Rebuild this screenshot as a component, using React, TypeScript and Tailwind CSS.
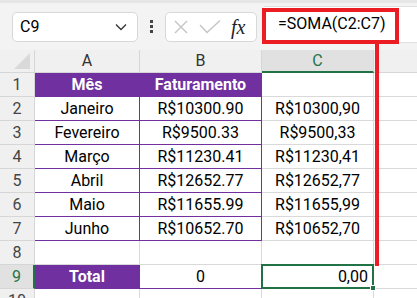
import React from "react";

const rows = [
  { a: "Janeiro", b: "R$10300.90", c: "R$10300,90" },
  { a: "Fevereiro", b: "R$9500.33", c: "R$9500,33" },
  { a: "Março", b: "R$11230.41", c: "R$11230,41" },
  { a: "Abril", b: "R$12652.77", c: "R$12652,77" },
  { a: "Maio", b: "R$11655.99", c: "R$11655,99" },
  { a: "Junho", b: "R$10652.70", c: "R$10652,70" },
];

const rowHead =
  "h-[24px] flex items-center justify-center bg-[#f0f0f0] border-r border-b border-[#d6d6d6] text-[#444] text-[16px]";
const cell = "h-[24px] flex items-center border-r border-b border-[#d9d9d9] text-[16px] text-black";

export default function App() {
  return (
    <div
      className="relative w-[417px] h-[298px] overflow-hidden bg-white"
      style={{ fontFamily: "Roboto, 'Liberation Sans', sans-serif" }}
    >
      {/* toolbar */}
      <div className="h-[50px] bg-[#f3f3f3] border-t-[3px] border-[#e6e6e6] flex items-center">
        <div className="ml-[12px] w-[126px] h-[30px] bg-white border border-[#d8d8d8] rounded-[5px] flex items-center justify-between pl-[7px] pr-[10px]">
          <span className="text-[16px] text-black">C9</span>
          <svg width="12" height="8" viewBox="0 0 12 8">
            <path d="M1 1.5 L6 6.5 L11 1.5" fill="none" stroke="#333" strokeWidth="1.3" />
          </svg>
        </div>
        <div className="w-[27px] flex flex-col items-center gap-[2px]">
          <div className="w-[3px] h-[3px] bg-[#444]" />
          <div className="w-[3px] h-[3px] bg-[#444]" />
          <div className="w-[3px] h-[3px] bg-[#444]" />
        </div>
        <div className="w-[92px] h-[30px] bg-white border border-[#d8d8d8] rounded-[5px] flex items-center pl-[7px] gap-[10px]">
          <svg width="16" height="16" viewBox="0 0 16 16">
            <path d="M2 2 L14 14 M14 2 L2 14" stroke="#c4c4c4" strokeWidth="1.4" fill="none" />
          </svg>
          <svg width="22" height="16" viewBox="0 0 22 16">
            <path d="M1 6 L8 13.5 L21 1.5" stroke="#c4c4c4" strokeWidth="1.4" fill="none" />
          </svg>
          <span
            className="text-[20px] italic text-[#222] leading-none"
            style={{ fontFamily: "'Liberation Serif', serif" }}
          >
            fx
          </span>
        </div>
        <div className="ml-[7px] flex-1 h-[37px] bg-white border-y border-[#e0e0e0] flex items-center pl-[14px] -mt-[5px]">
          <span className="text-[16px] text-black">=SOMA(C2:C7)</span>
        </div>
      </div>

      {/* grid */}
      <div className="grid grid-cols-[35px_105px_122px_112px_1fr]">
        {/* column headers */}
        <div className="h-[23px] bg-[#f0f0f0] border-r border-b border-[#d6d6d6] relative">
          <svg className="absolute right-[4px] bottom-[3px]" width="16" height="16" viewBox="0 0 16 16">
            <path d="M16 0 L16 16 L0 16 Z" fill="#d9d9d9" />
          </svg>
        </div>
        <div className="h-[23px] bg-[#f0f0f0] border-r border-b border-[#d6d6d6] flex items-center justify-center text-[16px] text-[#333]">A</div>
        <div className="h-[23px] bg-[#f0f0f0] border-r border-b border-[#d6d6d6] flex items-center justify-center text-[16px] text-[#333]">B</div>
        <div className="h-[23px] bg-[#e1e1e1] border-r border-[#d6d6d6] border-b-2 border-b-[#217346] flex items-center justify-center text-[16px] text-[#217346]">C</div>
        <div className="h-[23px] bg-[#f0f0f0] border-b border-[#d6d6d6]" />

        {/* row 1 */}
        <div className={rowHead}>1</div>
        <div className="h-[24px] flex items-center justify-center bg-[#7030a0] text-white font-bold text-[16px] border-r border-b border-[#7030a0]">Mês</div>
        <div className="h-[24px] flex items-center justify-center bg-[#7030a0] text-white font-bold text-[16px] border-r border-b border-[#7030a0]">Faturamento</div>
        <div className={cell} />
        <div className="h-[24px] border-b border-[#d9d9d9]" />

        {rows.map((r, i) => (
          <React.Fragment key={i}>
            <div className={rowHead}>{i + 2}</div>
            <div className="h-[24px] flex items-center justify-center text-[16px] text-black border-r border-b border-[#7030a0]">{r.a}</div>
            <div className="h-[24px] flex items-center justify-center text-[16px] text-black border-r border-b border-[#7030a0]">{r.b}</div>
            <div className={cell + " justify-center"}>{r.c}</div>
            <div className="h-[24px] border-b border-[#d9d9d9]" />
          </React.Fragment>
        ))}

        {/* row 8 */}
        <div className={rowHead}>8</div>
        <div className={cell} />
        <div className={cell} />
        <div className={cell} />
        <div className="h-[24px] border-b border-[#d9d9d9]" />

        {/* row 9 */}
        <div className="h-[24px] flex items-center justify-center bg-[#e1e1e1] border-r-2 border-r-[#217346] border-b border-[#d6d6d6] text-[#217346] text-[16px]">9</div>
        <div className="h-[24px] flex items-center justify-center bg-[#7030a0] text-white font-bold text-[16px] border-r border-b border-[#7030a0]">Total</div>
        <div className="h-[24px] flex items-center justify-center text-[16px] text-black border-r border-b border-[#7030a0]">0</div>
        <div className="relative h-[24px] flex items-center justify-end pr-[4px] text-[16px] text-black border-2 border-[#217346] -mt-[1px] -ml-[1px] h-[25px]">
          0,00
          <div className="absolute -right-[4px] -bottom-[4px] w-[6px] h-[6px] bg-[#217346] border border-white" />
        </div>
        <div className="h-[24px] border-b border-[#d9d9d9]" />

        {/* row 10 */}
        <div className={rowHead}>10</div>
        <div className={cell} />
        <div className={cell} />
        <div className={cell} />
        <div className="h-[24px]" />
      </div>

      {/* red annotation */}
      <div className="absolute left-[262px] top-[8px] w-[137px] h-[36px] border-[4px] border-[#eb1c24]" />
      <div className="absolute left-[375px] top-[44px] w-[4px] h-[222px] bg-[#eb1c24]" />
    </div>
  );
}
